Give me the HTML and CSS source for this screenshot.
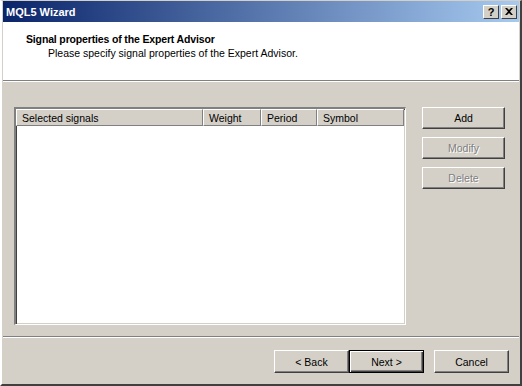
FILE: index.html
```html
<!DOCTYPE html>
<html lang="en">
<head>
  <meta charset="UTF-8">
  <title>MQL5 Wizard</title>
  <link rel="stylesheet" href="styles.css">
</head>
<body>
<div class="window">
  <div class="titlebar">
    <span class="title">MQL5 Wizard</span>
    <div class="caption-btns">
      <span class="cap-btn">?</span>
      <span class="cap-btn close">
        <svg width="8" height="7" viewBox="0 0 8 7"><path d="M0 0h2l2 2 2-2h2L5 3.5 8 7H6L4 5 2 7H0l3-3.5z" fill="#000"/></svg>
      </span>
    </div>
  </div>

  <div class="header">
    <div class="h-title">Signal properties of the Expert Advisor</div>
    <div class="h-sub">Please specify signal properties of the Expert Advisor.</div>
  </div>
  <div class="sep"></div>

  <div class="content">
    <div class="list">
      <div class="list-head">
        <div class="col c1">Selected signals</div>
        <div class="col c2">Weight</div>
        <div class="col c3">Period</div>
        <div class="col c4">Symbol</div>
      </div>
    </div>
    <div class="side">
      <button class="btn">Add</button>
      <button class="btn" disabled>Modify</button>
      <button class="btn" disabled>Delete</button>
    </div>
  </div>

  <div class="sep"></div>
  <div class="footer">
    <button class="btn">&lt; Back</button>
    <button class="btn default">Next &gt;</button>
    <button class="btn cancel">Cancel</button>
  </div>
</div>
</body>
</html>
```

FILE: styles.css
```css
body {
  margin: 0;
  background: #d4d0c8;
  font-family: "Liberation Sans", Arial, sans-serif;
  font-size: 10.5px;
}

.window {
  width: 522px;
  height: 386px;
  box-sizing: border-box;
  background: #d4d0c8;
  border-left: 2px solid #ffffff;
  border-top: 1px solid #d4d0c8;
  border-right: 2px solid #404040;
  border-bottom: 2px solid #404040;
  padding: 0 1px;
  display: flex;
  flex-direction: column;
}

.titlebar {
  height: 21px;
  display: flex;
  align-items: center;
  justify-content: space-between;
  padding: 0 2px 0 3px;
  background: linear-gradient(to right, #0a246a, #a6caf0);
  color: #fff;
  flex-shrink: 0;
}

.title {
  font-weight: bold;
  font-size: 11px;
}

.caption-btns {
  display: flex;
  gap: 2px;
}

.cap-btn {
  width: 16px;
  height: 14px;
  box-sizing: border-box;
  background: #d4d0c8;
  color: #000;
  font-weight: bold;
  font-size: 11px;
  display: flex;
  align-items: center;
  justify-content: center;
  border-top: 1px solid #fff;
  border-left: 1px solid #fff;
  border-right: 1px solid #404040;
  border-bottom: 1px solid #404040;
}

.header {
  height: 58px;
  background: #fff;
  padding: 11px 0 0 23px;
  box-sizing: border-box;
  flex-shrink: 0;
}

.h-title {
  font-weight: bold;
  font-size: 10.5px;
  letter-spacing: -0.15px;
  height: 13px;
}

.h-sub {
  margin-left: 22px;
  margin-top: 1px;
}

.sep {
  height: 0;
  border-top: 1px solid #808080;
  border-bottom: 1px solid #fff;
  flex-shrink: 0;
}

.content {
  flex: 1;
  display: flex;
  padding: 25px 14px 11px 11px;
  gap: 16px;
}

.list {
  width: 392px;
  background: #fff;
  box-sizing: border-box;
  border-top: 2px solid #808080;
  border-left: 2px solid #808080;
  border-right: 1px solid #fff;
  border-bottom: 1px solid #fff;
  box-shadow: inset 1px 1px 0 #404040, inset -1px -1px 0 #d4d0c8;
}

.list-head {
  display: flex;
  height: 17px;
}

.col {
  box-sizing: border-box;
  background: #d4d0c8;
  padding: 2px 0 0 5px;
  border-top: 1px solid #fff;
  border-left: 1px solid #fff;
  border-right: 1px solid #808080;
  border-bottom: 1px solid #808080;
}

.c1 { width: 187px; }
.c2 { width: 58px; }
.c3 { width: 56px; }
.c4 { width: 87px; }

.side {
  display: flex;
  flex-direction: column;
  gap: 8px;
}

.btn {
  width: 83px;
  height: 22px;
  box-sizing: border-box;
  background: #d4d0c8;
  font-family: "Liberation Sans", Arial, sans-serif;
  font-size: 10.5px;
  color: #000;
  padding: 0;
  border-top: 1px solid #fff;
  border-left: 1px solid #fff;
  border-right: 1px solid #404040;
  border-bottom: 1px solid #404040;
  box-shadow: inset -1px -1px 0 #808080;
}

.btn:disabled {
  color: #808080;
  text-shadow: 1px 1px 0 #fff;
}

.footer {
  height: 46px;
  display: flex;
  align-items: flex-start;
  padding: 12px 0 0 271px;
  box-sizing: border-box;
  flex-shrink: 0;
}

.footer .btn {
  width: 75px;
  height: 23px;
}

.btn.default {
  border: 1px solid #000;
  box-shadow: inset 1px 1px 0 #fff, inset -1px -1px 0 #404040, inset -2px -2px 0 #808080;
}

.btn.cancel {
  margin-left: 10px;
}
```
